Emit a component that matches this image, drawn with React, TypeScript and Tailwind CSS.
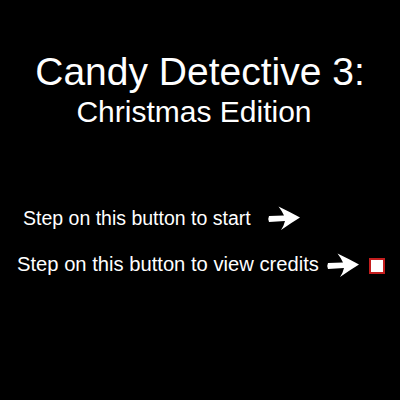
import React from "react";

function Arrow() {
  return (
    <svg width="38" height="28" viewBox="0 0 38 28" className="shrink-0">
      <defs>
        <filter id="soft" x="-10%" y="-10%" width="120%" height="120%">
          <feGaussianBlur stdDeviation="0.6" />
        </filter>
      </defs>
      <path
        d="M3 12 L18 11.5 Q16 7 12.5 2.5 Q24 8 34 13.5 Q25 19 15 26 Q18 21.5 19 17 L3 18 Q1.5 15 3 12 Z"
        fill="#ffffff"
        filter="url(#soft)"
      />
    </svg>
  );
}

export default function App() {
  return (
    <div className="w-[400px] h-[400px] bg-black text-white font-['Liberation_Sans',Arial,sans-serif] flex flex-col">
      <div className="mt-[52px] flex flex-col items-center">
        <div className="text-[39px] leading-[39px]">Candy Detective 3:</div>
        <div className="mt-[6px] pr-[12px] text-[30px] leading-[30px]">Christmas Edition</div>
      </div>
      <div className="mt-[77px] flex items-center pl-[23px]">
        <span className="text-[19.5px] leading-[20px]">Step on this button to start</span>
        <div className="ml-[15px]">
          <Arrow />
        </div>
      </div>
      <div className="mt-[17px] flex items-center pl-[17px]">
        <span className="text-[20.2px] leading-[20px]">Step on this button to view credits</span>
        <div className="ml-[6px] mt-[2px]">
          <Arrow />
        </div>
        <div className="ml-[6px] mt-[4px] w-[16px] h-[16px] bg-white border-2 border-[#c41e1e]" />
      </div>
    </div>
  );
}
